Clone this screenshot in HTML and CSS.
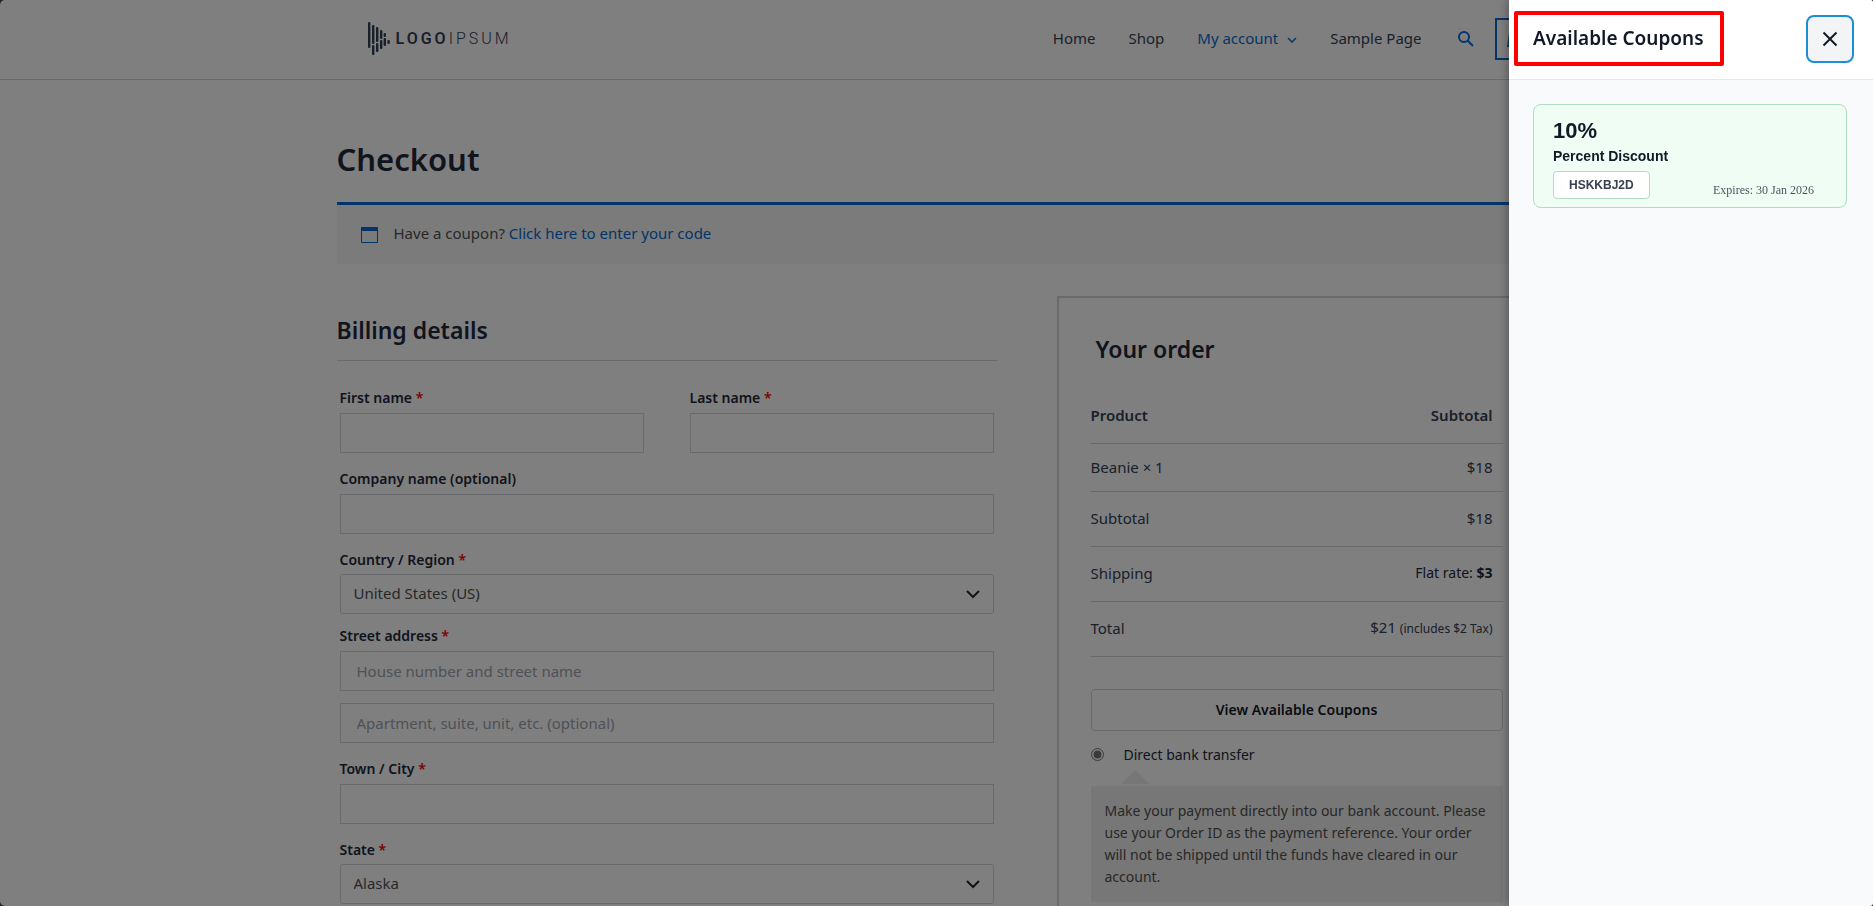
FILE: index.html
```html
<!DOCTYPE html>
<html lang="en">

<head>
    <meta charset="UTF-8">
    <title>Checkout</title>
    <link rel="stylesheet" href="styles.css">
</head>

<body>
    <header class="site-header">
        <div class="container header-row">
            <a href="#" class="logo">
                <svg width="22" height="34" viewBox="0 0 22 34" fill="#334155">
                    <rect x="0" y="0" width="2.4" height="26" rx="1"/>
                    <rect x="4" y="3" width="2.4" height="19" rx="1"/>
                    <rect x="4" y="23" width="2.4" height="10" rx="1"/>
                    <rect x="8" y="5" width="2.4" height="15" rx="1"/>
                    <rect x="8" y="21" width="2.4" height="9" rx="1"/>
                    <rect x="12" y="8" width="2.4" height="9" rx="1"/>
                    <rect x="12" y="18" width="2.4" height="9" rx="1"/>
                    <rect x="15.6" y="11" width="2.4" height="4" rx="1"/>
                    <rect x="15.6" y="16" width="2.4" height="8" rx="1"/>
                    <rect x="19.4" y="18" width="2.4" height="4" rx="1"/>
                </svg>
                <span class="logo-text"><b>LOGO</b>IPSUM</span>
            </a>
            <nav class="menu">
                <a href="#">Home</a>
                <a href="#">Shop</a>
                <a href="#" class="current">My account
                    <svg width="10" height="6" viewBox="0 0 10 6" fill="none" stroke="currentColor" stroke-width="1.5"><path d="M1 1l4 4 4-4"/></svg>
                </a>
                <a href="#">Sample Page</a>
            </nav>
            <button class="search" aria-label="Search">
                <svg width="16" height="16" viewBox="0 0 16 16" fill="none" stroke="currentColor" stroke-width="2"><circle cx="6" cy="6" r="5"/><path d="M9.7 9.7L15 15"/></svg>
            </button>
            <a href="#" class="cart" aria-label="Cart">
                <svg width="18" height="16" viewBox="0 0 18 16" fill="currentColor"><path d="M2 2h14l2 14H0z"/></svg>
            </a>
        </div>
    </header>

    <main class="container">
        <h1>Checkout</h1>
        <div class="notice">
            <svg width="17" height="16" viewBox="0 0 17 16"><path d="M0.5 1h16v14.5h-16z" fill="none" stroke="#046bd2"/><path d="M0 0h17v4H0z" fill="#046bd2"/></svg>
            <p>Have a coupon? <a href="#">Click here to enter your code</a></p>
        </div>

        <div class="checkout">
            <form class="billing">
                <h2>Billing details</h2>
                <div class="fields">
                    <div class="two">
                        <div class="field">
                            <label for="first">First name <span>*</span></label>
                            <input type="text" id="first">
                        </div>
                        <div class="field">
                            <label for="last">Last name <span>*</span></label>
                            <input type="text" id="last">
                        </div>
                    </div>
                    <div class="field">
                        <label for="company">Company name (optional)</label>
                        <input type="text" id="company">
                    </div>
                    <div class="field drop">
                        <label for="country">Country / Region <span>*</span></label>
                        <select id="country"><option>United States (US)</option></select>
                    </div>
                    <div class="field street">
                        <label for="street">Street address <span>*</span></label>
                        <input type="text" id="street" placeholder="House number and street name">
                        <input type="text" aria-label="Apartment" placeholder="Apartment, suite, unit, etc. (optional)">
                    </div>
                    <div class="field">
                        <label for="city">Town / City <span>*</span></label>
                        <input type="text" id="city">
                    </div>
                    <div class="field drop">
                        <label for="state">State <span>*</span></label>
                        <select id="state"><option>Alaska</option></select>
                    </div>
                </div>
            </form>

            <section class="order">
                <h2>Your order</h2>
                <table>
                    <thead>
                        <tr><th>Product</th><th>Subtotal</th></tr>
                    </thead>
                    <tbody>
                        <tr class="item"><td>Beanie × 1</td><td>$18</td></tr>
                        <tr><td>Subtotal</td><td>$18</td></tr>
                        <tr><td>Shipping</td><td class="rate">Flat rate: <b>$3</b></td></tr>
                        <tr><td>Total</td><td>$21 <small>(includes $2 Tax)</small></td></tr>
                    </tbody>
                </table>
                <button class="view-coupons">View Available Coupons</button>
                <div class="payment">
                    <input type="radio" id="bank" name="payment" checked>
                    <label for="bank">Direct bank transfer</label>
                </div>
                <div class="payment-box">Make your payment directly into our bank account. Please use your Order ID as the payment reference. Your order will not be shipped until the funds have cleared in our account.</div>
            </section>
        </div>
    </main>

    <div class="overlay"></div>

    <aside class="drawer">
        <div class="drawer-head">
            <h2>Available Coupons</h2>
            <button class="close" aria-label="Close">
                <svg width="16" height="16" viewBox="0 0 16 16" fill="none" stroke="#111827" stroke-width="2"><path d="M1.5 1.5l13 13M14.5 1.5l-13 13"/></svg>
            </button>
        </div>
        <div class="drawer-body">
            <div class="coupon">
                <div class="amount">10%</div>
                <div class="type">Percent Discount</div>
                <div class="coupon-foot">
                    <button class="code">HSKKBJ2D</button>
                    <span class="expires">Expires: 30 Jan 2026</span>
                </div>
            </div>
        </div>
    </aside>
</body>

</html>
```

FILE: styles.css
```css
*{
    box-sizing: border-box;
}

html{
    background-color: #444;
}

body{
    margin: 0;
    height: 100vh;
    overflow: hidden;
    border-radius: 5px;
    background-color: #fff;
    color: #334155;
    font-family: "Noto Sans", "Open Sans", sans-serif;
    font-size: 15px;
    line-height: 24px;
}

a{
    color: #046bd2;
    text-decoration: none;
}

h1, h2, p{
    margin: 0;
}

h1, h2{
    color: #1e293b;
    font-weight: 600;
}

button, input, select{
    font-family: inherit;
}

.container{
    max-width: 1200px;
    margin: 0 auto;
}

/* header */

.site-header{
    border-bottom: 1px solid #d1d5db;
}

.header-row{
    height: 79px;
    padding-bottom: 1px;
    display: flex;
    align-items: center;
}

.logo{
    display: flex;
    align-items: center;
    gap: 6px;
    margin-left: 31px;
    margin-right: auto;
    color: #334155;
}

.logo-text{
    font-family: Roboto, sans-serif;
    font-size: 16px;
    font-weight: 300;
    letter-spacing: 3px;
}

.logo-text b{
    font-weight: 600;
}

.menu{
    display: flex;
    gap: 33px;
    padding-bottom: 2px;
}

.menu a{
    color: #334155;
}

.menu .current{
    color: #046bd2;
}

.menu svg{
    margin-left: 5px;
    vertical-align: middle;
}

.search{
    display: flex;
    margin: 0 21px 0 36px;
    padding: 0;
    border: 0;
    background: none;
    color: #046bd2;
}

.cart{
    width: 42px;
    height: 42px;
    border: 2px solid #046bd2;
    display: flex;
    align-items: center;
    justify-content: center;
}

/* checkout page */

h1{
    padding-top: 56px;
    margin-bottom: 20px;
    font-size: 31px;
    line-height: 46px;
}

.notice{
    display: flex;
    align-items: center;
    gap: 16px;
    height: 62px;
    padding-left: 24px;
    border-top: 3px solid #046bd2;
    background-color: #f7f6f7;
    color: #515151;
}

.notice p{
    padding-bottom: 3px;
}

.checkout{
    display: flex;
    justify-content: space-between;
    align-items: flex-start;
    margin-top: 32px;
}

.billing{
    width: 55%;
}

.billing h2{
    padding: 19px 0 15px;
    border-bottom: 1px solid #d1d5db;
    font-size: 23px;
    line-height: 30px;
}

.fields{
    padding: 27px 3px;
    display: flex;
    flex-direction: column;
    gap: 16px;
}

.two{
    display: grid;
    grid-template-columns: 1fr 1fr;
    gap: 46px;
}

.field{
    display: flex;
    flex-direction: column;
    gap: 5px;
}

.drop{
    gap: 4px;
}

.street input + input{
    margin-top: 7px;
}

.drop + .street{
    margin-top: -4px;
}

.field label{
    color: #1e293b;
    font-size: 14px;
    font-weight: 600;
    line-height: 20px;
}

.field label span{
    color: #f00;
}

.field input, .field select{
    width: 100%;
    height: 40px;
    padding: 0 16px;
    border: 1px solid #d1d5db;
    background-color: #fff;
    color: #475569;
    font-size: 15px;
}

.field input::placeholder{
    color: #9ca3af;
}

.field select{
    appearance: none;
    padding: 0 13px 2px;
    border-radius: 3px;
    color: #515151;
    background-image: url("data:image/svg+xml,%3Csvg xmlns='http://www.w3.org/2000/svg' width='14' height='9' fill='none' stroke='%231e293b' stroke-width='2'%3E%3Cpath d='M1 1l6 6 6-6'/%3E%3C/svg%3E");
    background-repeat: no-repeat;
    background-position: right 13px center;
}

/* order summary */

.order{
    width: 40%;
    padding: 0 32px 32px;
    border: 2px solid #d1d5db;
}

.order h2{
    padding: 36px 5px 24px;
    font-size: 23px;
    line-height: 30px;
}

.order table{
    width: 100%;
    border-collapse: collapse;
}

.order th, .order td{
    height: 55px;
    padding: 0 10px 1px 0;
    border-bottom: 1px solid #d1d5db;
    text-align: left;
}

.order th{
    font-weight: 600;
}

.order .item td{
    height: 48px;
}

.order th:last-child, .order td:last-child{
    text-align: right;
}

.order .rate{
    color: #1e293b;
    font-size: 14px;
}

small{
    font-size: 12px;
}

.view-coupons{
    display: block;
    width: 100%;
    height: 42px;
    margin: 32px 0 12px;
    border: 1px solid #d1d5db;
    border-radius: 4px;
    background: none;
    color: #111827;
    font-size: 14px;
    font-weight: 600;
}

.payment{
    display: flex;
    align-items: center;
    gap: 20px;
    color: #1e293b;
    font-size: 14px;
}

.payment input{
    width: 13px;
    height: 13px;
    margin: 0;
    accent-color: #767676;
}

.payment-box{
    position: relative;
    margin-top: 19px;
    padding: 14px;
    border-radius: 2px;
    background-color: #eee;
    color: #515151;
    font-size: 14px;
    line-height: 22px;
}

.payment-box::before{
    content: "";
    position: absolute;
    left: 30px;
    top: -16px;
    border: 14px solid transparent;
    border-top: 0;
    border-bottom-color: #eee;
}

/* coupon drawer */

.overlay{
    position: fixed;
    inset: 0;
    background-color: rgba(0, 0, 0, 0.5);
}

.drawer{
    position: fixed;
    top: 0;
    right: 0;
    bottom: 0;
    width: 364px;
    border-radius: 0 3px 3px 0;
    background-color: #f9fafb;
    box-shadow: -2px 0 10px rgba(0, 0, 0, 0.3);
}

.drawer-head{
    display: flex;
    align-items: center;
    justify-content: space-between;
    height: 80px;
    padding: 0 19px 2px 5px;
    border-bottom: 1px solid #e5e7eb;
    border-radius: 0 3px 0 0;
    background-color: #fff;
}

.drawer-head h2{
    padding: 8px 16px 9px 15px;
    border: 4px solid #f00;
    border-radius: 2px;
    color: #111827;
    font-size: 19px;
    line-height: 30px;
}

.close{
    width: 48px;
    height: 48px;
    display: flex;
    align-items: center;
    justify-content: center;
    border: 2px solid #1c8fd4;
    border-radius: 8px;
    background-color: #f3f4f6;
}

.drawer-body{
    padding: 24px 26px 24px 24px;
}

.coupon{
    padding: 14px 32px 8px 19px;
    border: 1px solid #b0dcc0;
    border-radius: 8px;
    background-color: #f0fdf4;
    color: #111827;
    font-family: "Liberation Sans", Arial, sans-serif;
}

.amount{
    font-size: 22px;
    font-weight: 700;
    line-height: 24px;
}

.type{
    margin: 3px 0 5px;
    font-size: 14px;
    font-weight: 700;
    line-height: 20px;
}

.coupon-foot{
    display: flex;
    justify-content: space-between;
    align-items: flex-end;
}

.code{
    height: 28px;
    padding: 0 15px;
    border: 1px solid #b0dcc0;
    border-radius: 4px;
    background-color: #fff;
    color: #374151;
    font-size: 12px;
    font-weight: 700;
}

.expires{
    color: #4b5563;
    font-family: "Liberation Serif", "Times New Roman", serif;
    font-size: 12px;
    line-height: 18px;
}
```
